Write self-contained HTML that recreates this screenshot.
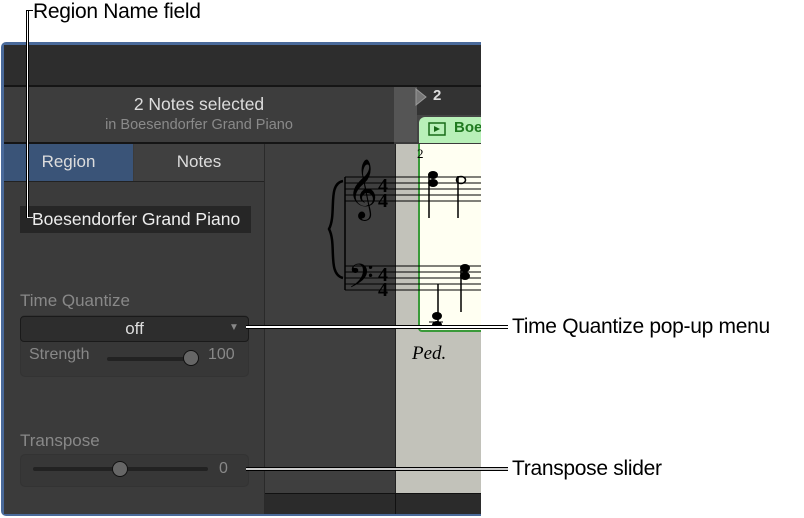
<!DOCTYPE html>
<html><head><style>
body{margin:0;width:804px;height:518px;background:#fff;position:relative;overflow:hidden;font-family:"Liberation Sans",sans-serif}
.a{position:absolute}
.lbl{font-size:21px;color:#000;letter-spacing:-0.3px}
</style></head><body>
<div class="a lbl" style="left:33px;top:0px">Region Name field</div>
<div class="a lbl" style="left:512px;top:315px">Time Quantize pop-up menu</div>
<div class="a lbl" style="left:512px;top:457px">Transpose slider</div>

<div class="a" style="left:1px;top:42px;width:480px;height:474px;background:#4a6a9a;border-radius:5px 0 0 5px"></div>
<div class="a" style="left:4px;top:45px;width:477px;height:469px;background:#3b3b3b;overflow:hidden">
  <div class="a" style="left:0;top:0;width:477px;height:40px;background:#2d2d2d;border-bottom:2px solid #151515"></div>
  <div class="a" style="left:0;top:42px;width:390px;height:55px;background:#3d3d3d;border-bottom:2px solid #151515"></div>
  <div class="a" style="left:0;top:49px;width:390px;text-align:center;color:#ddd;font-size:17.5px">2 Notes selected</div>
  <div class="a" style="left:0;top:72px;width:390px;text-align:center;color:#8a8a8a;font-size:14.5px">in Boesendorfer Grand Piano</div>
  <div class="a" style="left:390px;top:42px;width:87px;height:28px;background:#333"></div>
  <div class="a" style="left:390px;top:42px;width:23px;height:55px;background:#555"></div>
  <div class="a" style="left:413px;top:70px;width:70px;height:27px;background:#444"></div>
  <svg class="a" style="left:410px;top:43px" width="16" height="18"><path d="M2 1 L12 9 L2 17Z" fill="#777" stroke="#999"/></svg>
  <div class="a" style="left:429px;top:42px;color:#ddd;font-size:15px;font-weight:bold">2</div>
  <div class="a" style="left:415px;top:72px;width:70px;height:26px;background:#b8f0b8;border-radius:6px 0 0 0"></div>
  <svg class="a" style="left:424px;top:77px" width="20" height="16"><rect x="1" y="1" width="16" height="12" fill="none" stroke="#186a18" stroke-width="1.5"/><path d="M6 4 L12 7 L6 10Z" fill="#186a18"/></svg>
  <div class="a" style="left:450px;top:74px;color:#207a20;font-size:15px;font-weight:bold">Boe</div>
  <div class="a" style="left:0;top:99px;width:129px;height:37px;background:#3a5478;color:#ddd;font-size:17px;line-height:36px;text-align:center">Region</div>
  <div class="a" style="left:130px;top:99px;width:130px;height:37px;background:#404040;color:#ddd;font-size:17px;line-height:36px;text-align:center">Notes</div>
  <div class="a" style="left:0;top:136px;width:260px;height:1px;background:#222"></div>
  <div class="a" style="left:260px;top:99px;width:1px;height:370px;background:#2a2a2a"></div>
  <div class="a" style="left:16px;top:161px;width:231px;height:27px;background:#262626;color:#eee;font-size:17.5px;line-height:27px;padding-left:12px;box-sizing:border-box">Boesendorfer Grand Piano</div>
  <div class="a" style="left:16px;top:246px;color:#888;font-size:17px">Time Quantize</div>
  <div class="a" style="left:16px;top:270px;width:227px;height:60px;background:#373737;border-radius:5px;border:1px solid #333"></div>
  <div class="a" style="left:16px;top:271px;width:227px;height:24px;background:#2d2d2d;border-radius:4px;border:1px solid #1a1a1a;color:#ddd;font-size:17px;line-height:23px;text-align:center">off</div>
  <div class="a" style="left:225px;top:277px;color:#888;font-size:10px">▼</div>
  <div class="a" style="left:25px;top:301px;color:#888;font-size:16px">Strength</div>
  <div class="a" style="left:103px;top:312px;width:90px;height:4px;background:#222;border-radius:2px"></div>
  <div class="a" style="left:179px;top:305px;width:14px;height:14px;background:#666;border-radius:50%;border:1px solid #111"></div>
  <div class="a" style="left:204px;top:301px;color:#888;font-size:16px">100</div>
  <div class="a" style="left:16px;top:386px;color:#888;font-size:17px">Transpose</div>
  <div class="a" style="left:16px;top:409px;width:227px;height:31px;background:#373737;border-radius:5px;border:1px solid #333"></div>
  <div class="a" style="left:29px;top:422px;width:175px;height:4px;background:#222;border-radius:2px"></div>
  <div class="a" style="left:108px;top:416px;width:14px;height:14px;background:#666;border-radius:50%;border:1px solid #111"></div>
  <div class="a" style="left:215px;top:415px;color:#888;font-size:16px">0</div>
  <div class="a" style="left:261px;top:99px;width:130px;height:349px;background:#3f3f3f"></div>
  <div class="a" style="left:391px;top:99px;width:1px;height:370px;background:#222"></div>
  <div class="a" style="left:392px;top:99px;width:85px;height:349px;background:#c2c2ba"></div>
  <div class="a" style="left:414px;top:99px;width:70px;height:186px;background:#fffff2;border-left:2px solid #3a9a3a;border-bottom:2px solid #3a9a3a;border-radius:0 0 0 4px"></div>
  <div class="a" style="left:261px;top:448px;width:216px;height:1px;background:#111"></div>
  <div class="a" style="left:261px;top:449px;width:216px;height:20px;background:#2b2b2b"></div>
  <div class="a" style="left:391px;top:449px;width:1px;height:20px;background:#111"></div>
  <svg class="a" style="left:261px;top:99px" width="216" height="250">
    <g stroke="#000" stroke-width="1">
      <path d="M80 33H216M80 39H216M80 45H216M80 51H216M80 57H216"/>
      <path d="M80 122H216M80 128H216M80 134H216M80 140H216M80 146H216"/>
      <path d="M80 33V146" stroke-width="1.5"/>
      <path d="M164 30V74M193 32V74M173 140V180M196 126V168" stroke-width="1.5"/>
      <path d="M164 178H178"/>
    </g>
    <path d="M78 37 C62 40 72 70 64 85 C72 100 62 130 78 134" fill="none" stroke="#000" stroke-width="2.5"/>
    <text x="82" y="62" font-family="DejaVu Sans,serif" font-size="52" fill="#000">𝄞</text>
    <text x="83" y="150" font-family="DejaVu Sans,serif" font-size="40" fill="#000">𝄢</text>
    <g font-size="20" font-weight="bold" font-family="Liberation Serif,serif">
    <text x="113" y="48">4</text><text x="113" y="63">4</text>
    <text x="113" y="137">4</text><text x="113" y="152">4</text></g>
    <text x="152" y="14" font-size="13" font-family="Liberation Serif,serif">2</text>
    <ellipse cx="168" cy="31" rx="5" ry="4" fill="#000"/><ellipse cx="168" cy="39" rx="5" ry="4" fill="#000"/>
    <ellipse cx="196" cy="36" rx="4.5" ry="3.5" fill="none" stroke="#000" stroke-width="1.5"/>
    <ellipse cx="200" cy="124" rx="5" ry="4" fill="#000"/><ellipse cx="200" cy="132" rx="5" ry="4" fill="#000"/>
    <ellipse cx="172" cy="172" rx="5" ry="4" fill="#000"/><ellipse cx="172" cy="181" rx="5" ry="4" fill="#000"/>
    <text x="147" y="215" font-size="19" font-style="italic" font-family="Liberation Serif,serif">Ped.</text>
  </svg>
  <div class="a" style="left:0;top:469px;width:477px;height:1px;background:#4a6a9a"></div>
</div>

<div class="a" style="left:26px;top:10px;width:1px;height:208px;background:#000"></div>
<div class="a" style="left:27px;top:10px;width:1px;height:208px;background:#fff"></div>
<div class="a" style="left:28px;top:10px;width:1px;height:208px;background:#000"></div>
<div class="a" style="left:27px;top:10px;width:6px;height:1px;background:#000"></div>
<div class="a" style="left:28px;top:217px;width:5px;height:1px;background:#ddd"></div>
<div class="a" style="left:246px;top:325px;width:262px;height:4px;background:#000"></div>
<div class="a" style="left:246px;top:326px;width:262px;height:2px;background:#fff"></div>
<div class="a" style="left:246px;top:467px;width:262px;height:4px;background:#000"></div>
<div class="a" style="left:246px;top:468px;width:262px;height:2px;background:#ccc"></div>
</body></html>
